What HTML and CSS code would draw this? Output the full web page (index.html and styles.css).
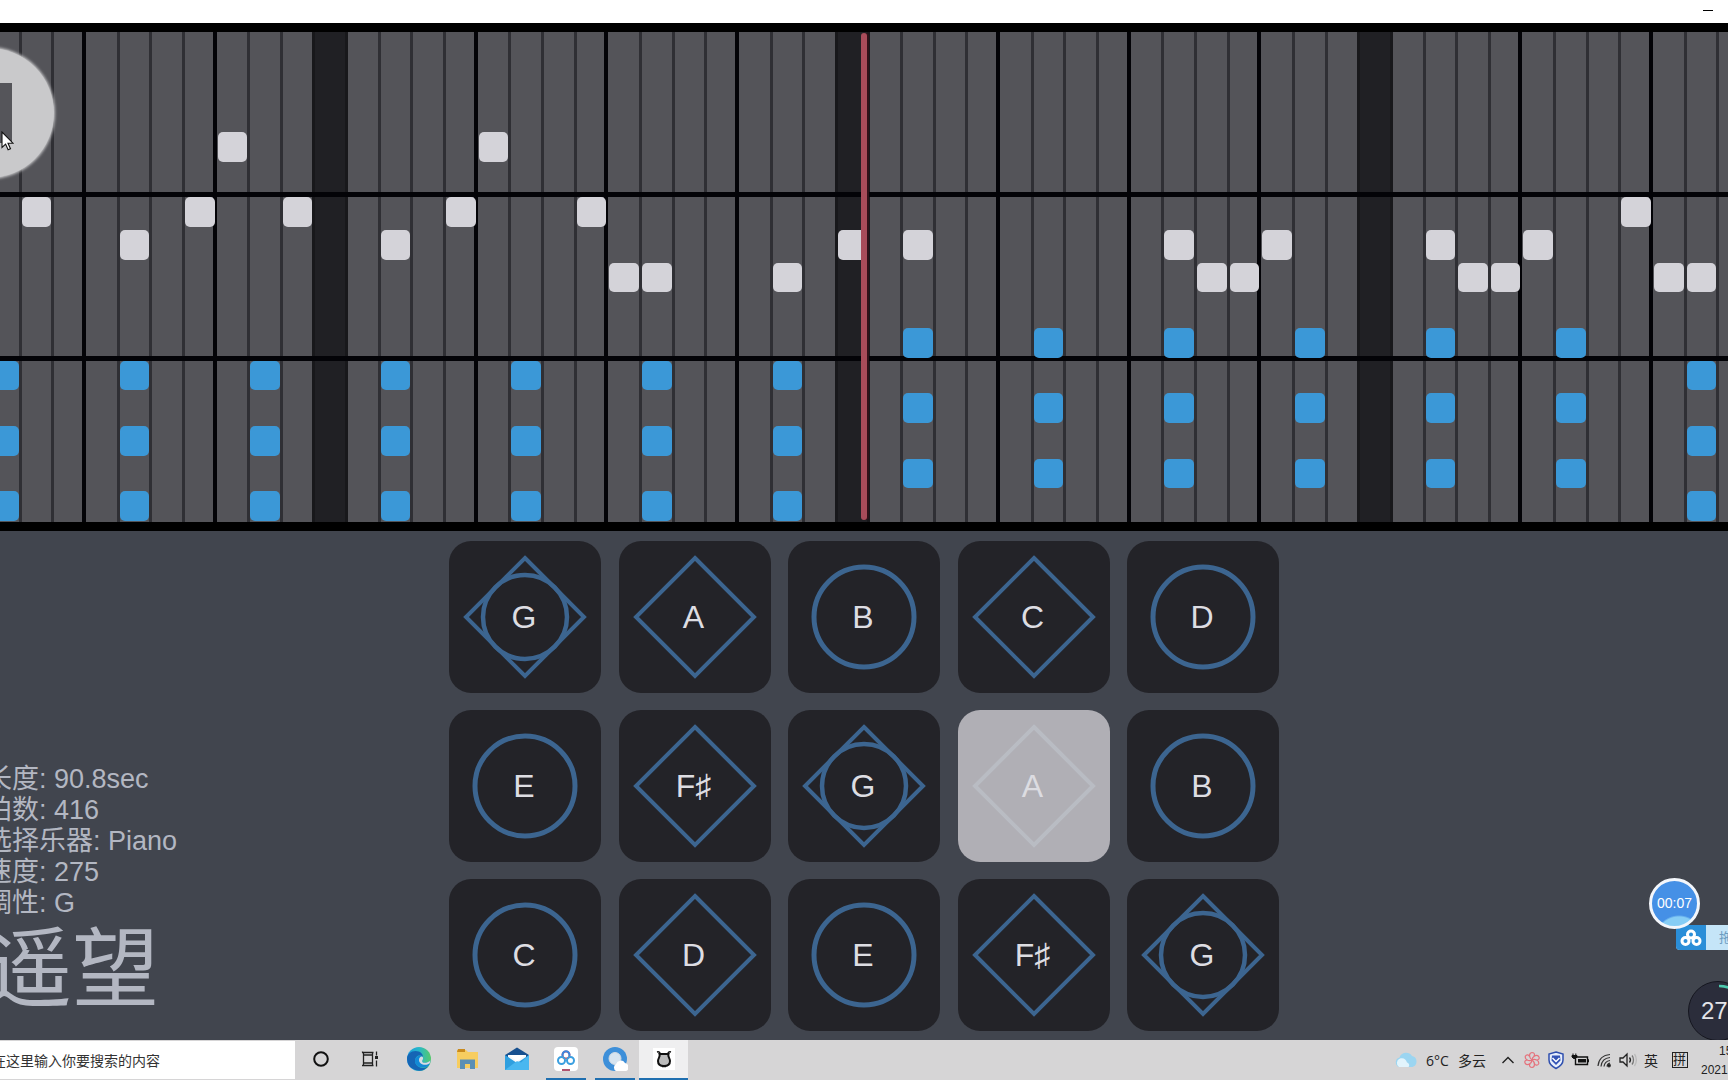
FILE: index.html
```html
<!DOCTYPE html>
<html lang="zh-CN">
<head>
<meta charset="utf-8">
<title>遥望</title>
<link rel="stylesheet" href="styles.css">
</head>
<body>
<header class="titlebar">
  <button class="minimize" type="button" aria-label="最小化"></button>
</header>

<section class="board" aria-label="乐谱">
  <div class="roll" id="roll"></div>
  <div class="playhead"></div>
  <button class="stop" type="button" aria-label="停止"><span class="stop-mark"></span></button>
  <svg class="cursor" width="13" height="20" viewBox="0 0 13 20"><path d="M1 1v15.500l3.600-3.400 2.500 5.600 2.400-1-2.500-5.500H12z" fill="#fff" stroke="#111" stroke-width="1.100"/></svg>
</section>

<main class="stage">
  <section class="info">
    <ul class="facts">
      <li>长度: 90.8sec</li>
      <li>拍数: 416</li>
      <li>选择乐器: Piano</li>
      <li>速度: 275</li>
      <li>调性: G</li>
    </ul>
    <h1 class="song">遥望</h1>
  </section>
  <section class="keys" id="keys" aria-label="琴键"></section>

  <div class="timer">00:07</div>
  <div class="drop">
    <span class="drop-icon"><svg width="22" height="18" viewBox="0 0 22 18" fill="none" stroke="#fff" stroke-width="3"><circle cx="11" cy="5.500" r="3.500"/><circle cx="5.500" cy="12" r="3.500"/><circle cx="16.500" cy="12" r="3.500"/></svg></span>
    <span class="drop-text">拖</span>
  </div>
  <div class="gauge"><svg class="gauge-arc" width="60" height="60" viewBox="0 0 60 60" fill="none"><path d="M30 4a26 26 0 0 1 18 7" stroke="#4cc9ad" stroke-width="2.500"/></svg>27</div>
</main>

<footer class="taskbar">
  <label class="search"><input class="search-box" type="text" placeholder="在这里输入你要搜索的内容" aria-label="搜索"></label>
  <nav class="apps">
    <button class="app" type="button" aria-label="Cortana"><svg width="24" height="24" viewBox="0 0 24 24"><circle cx="12" cy="12" r="6.800" fill="none" stroke="#111" stroke-width="2"/></svg></button>
    <button class="app" type="button" aria-label="任务视图"><svg width="24" height="24" viewBox="0 0 24 24" fill="none" stroke="#222" stroke-width="1.300"><path d="M5.500 8h9v8h-9zM4.500 5.500v-1M4 5.500h11.500M4 18.500h11.500M5.500 5v14M14.500 5v14M18.500 4.500v4M18.500 13.500v6"/><path d="M17 9h3v3h-3z" fill="#222" stroke="none"/></svg></button>
    <button class="app" type="button" aria-label="Edge"><svg width="26" height="26" viewBox="0 0 26 26"><defs><linearGradient id="eg" x1="0" x2="1"><stop offset="0" stop-color="#1b9be0"/><stop offset=".5" stop-color="#27b8c8"/><stop offset="1" stop-color="#56c96a"/></linearGradient></defs><circle cx="13" cy="13" r="12" fill="url(#eg)"/><path d="M1 13c0-5 4-8 8.500-8 5 0 7.500 3 7.500 6-3-3-8-1-8 4 0 4 4 7 8 7 2 0 4-.8 5.500-2A12 12 0 0 1 1 13z" fill="#1565b5"/><path d="M9 15c0-4 4-6.500 8-4 1 2-.8 2.800-.8 4.200 0 2 5 2.300 8.300-.7-.2 2-1 4-2.200 5.500-5 3-13.300 1-13.300-5z" fill="#1389d6"/><path d="M13 14c0-3 3-4.500 4-2.500.6 1.500-.8 2.300-.8 3.700 0 2.300 4.800 2.300 8.300-.7-.2 1.200-.6 2.200-1 3-4.500 3-10.500.5-10.500-3.500z" fill="#d7dce0"/></svg></button>
    <button class="app" type="button" aria-label="文件资源管理器"><svg width="26" height="26" viewBox="0 0 26 26"><path d="M2 4h9l2 2h10v16H2z" fill="#f7cd60"/><path d="M3 3h7v3H2z" fill="#c98a1d"/><path d="M5 23v-9.500h15V23h-5v-5h-5v5z" fill="#5a8fb5"/></svg></button>
    <button class="app" type="button" aria-label="邮件"><svg width="26" height="26" viewBox="0 0 26 26"><path d="M1 9l12-7.500L25 9v5H1z" fill="#17508f"/><path d="M4 9h18v8H4z" fill="#f4f7fa"/><path d="M1 9l12 8L25 9v15H1z" fill="#2f9fdf"/><path d="M1 24L13 15l4 1.500L25 9v15z" fill="#49b7f0"/><path d="M5 9h16l-8 6.500z" fill="#fff"/></svg></button>
    <button class="app running" type="button" aria-label="百度网盘"><svg width="26" height="26" viewBox="0 0 26 26" fill="none" stroke-width="2"><rect x="1" y="1" width="24" height="24" rx="4" fill="#fff"/><circle cx="13" cy="9" r="3.500" stroke="#e0566b"/><path d="M9.700 10a3.500 3.500 0 1 1 6.600 0" stroke="#3a86e0"/><circle cx="8.500" cy="14.500" r="3.500" stroke="#3a9fe0"/><circle cx="17.500" cy="14.500" r="3.500" stroke="#3a9fe0"/><path d="M9 24h8" stroke="#b0546f"/></svg></button>
    <button class="app running" type="button" aria-label="云浏览器"><svg width="26" height="26" viewBox="0 0 26 26"><circle cx="13" cy="13" r="12" fill="#3d8fd9"/><circle cx="13" cy="12.500" r="6" fill="#d6e4f0" stroke="#cfd9e2"/><path d="M14 25a4 4 0 0 1 0-7 5 5 0 0 1 9-1 4.200 4.200 0 0 1 1 8z" fill="#fff"/></svg></button>
    <button class="app active" type="button" aria-label="弹琴"><svg width="24" height="24" viewBox="0 0 24 24"><path d="M1 1h22v22H1z" fill="#fff"/><path d="M7.500 7c1 3-1.500 4-1.500 7 0 3.500 2.500 5 6 5s6-1.500 6-5c0-3-2.500-4-1.500-7z" fill="#bbb" stroke="#111" stroke-width="2"/><path d="M5 5c2-.5 3 0 3 2h8c0-2 1-2.500 3-2M10 19.500h4" fill="none" stroke="#111" stroke-width="1.600"/></svg></button>
  </nav>
  <div class="tray">
    <svg class="weather" width="24" height="18" viewBox="0 0 24 18"><path d="M5 16a5 5 0 0 1 .5-9.500A7 7 0 0 1 18 5c3 .5 4.500 2.500 4.500 5.500 0 3-2 5.500-5 5.500z" fill="#9bd5f1"/><path d="M5 16a4.800 4.800 0 0 1 1-8.500c4-1 6 1 7 4 2 .5 3 3 1.500 4.500z" fill="#e2f4fc"/></svg>
    <span class="temp">6°C</span>
    <span class="sky">多云</span>
    <svg class="tray-icon" width="24" height="20" viewBox="0 0 24 20"><path d="M6.500 13L12 7.500l5.500 5.500" fill="none" stroke="#222" stroke-width="1.400"/></svg>
    <svg class="tray-icon" width="24" height="20" viewBox="0 0 24 20" fill="none" stroke="#e5727c" stroke-width="1.200"><path d="M12 10c-3-2-3.500-7 0-7.500 3 0 3 3 1.500 4M12 10c.2-3.500 4.500-6 6.700-3.500 1.500 2.500-1 4-2.700 3.300M12 10c3-1.600 7.300.5 6.700 3.700-1.300 2.500-4 1.500-4.200-.4M12 10c3 2 3.500 7 0 7.500-3 0-3-3-1.500-4M12 10c-.2 3.500-4.500 6-6.700 3.500C3.800 11 6.300 9.500 8 10.200M12 10c-3 1.600-7.300-.5-6.700-3.700C6.600 3.800 9.300 4.800 9.500 6.700"/></svg>
    <svg class="tray-icon" width="24" height="20" viewBox="0 0 24 20"><path d="M12 2l7 2v6c0 4-3 6.500-7 8.500-4-2-7-4.500-7-8.500V4z" fill="#e8effc" stroke="#2f4fae" stroke-width="1.500"/><path d="M8 5.500h8l.5 5-4.500 4.500-4.500-4.500z" fill="#3353b5"/><path d="M8.500 8l3.500 3.500L15.500 8" fill="none" stroke="#fff" stroke-width="1.500"/></svg>
    <svg class="tray-icon" width="24" height="20" viewBox="0 0 24 20"><path d="M7.500 7h12v7.500h-12z" fill="none" stroke="#111" stroke-width="1.400"/><path d="M10 9h8v3.500h-8zM19.500 9.300h1.500v3h-1.500z" fill="#111"/><path d="M5 3.500v2.500M7.800 3.500v2.500M4 5.500h5v1.500L7.500 8.500h-2L4 7z" fill="#111" stroke="#111"/></svg>
    <svg class="tray-icon" width="24" height="20" viewBox="0 0 24 20" fill="none" stroke="#333" stroke-width="1.200"><path d="M6 16C6.500 9.500 11 5 18 4.500M9 16.500c.5-5 4-8.500 9-9M12 16.500c.5-3.500 2.500-5.500 6-6M15 16.500c.3-2 1-3 3-3.500"/><circle cx="17" cy="15.500" r="1.300" fill="#111"/></svg>
    <svg class="tray-icon" width="24" height="20" viewBox="0 0 24 20" fill="none" stroke="#222" stroke-width="1.300"><path d="M4 8h3l4-4v12l-4-4H4zM13.500 7.500c1.200 1.500 1.200 3.500 0 5"/><path d="M16 5.500c2 2.500 2 6.500 0 9" stroke="#777"/><path d="M18.500 4c2.500 3.500 2.500 8.500 0 12" stroke="#bbb"/></svg>
    <span class="ime">英</span>
    <span class="ime-mode">拼</span>
    <div class="clock"><span class="clock-time">15</span><span>2021</span></div>
  </div>
</footer>
<script src="app.js"></script>
</body>
</html>
```
FILE: app.js
```js
// Piano roll: 54 sixteenth columns by 15 pitch rows
const COLUMNS = 54;
const roll = document.getElementById('roll');
const measures = [10, 26, 42];

for (let c = 0; c < COLUMNS; c++) {
  const col = document.createElement('div');
  col.className = 'col';
  if (measures.includes(c)) col.classList.add('measure');
  else if (measures.includes(c - 1)) col.classList.add('after-measure');
  else if (c % 4 === 3) col.classList.add('beat');
  col.style.gridColumn = c + 1;
  roll.append(col);
}

for (const row of [6, 11]) {
  const line = document.createElement('div');
  line.className = 'octave';
  line.style.gridRow = row;
  roll.append(line);
}

const melody = [
  [1, 5], [4, 6], [6, 5], [7, 3], [9, 5], [12, 6], [14, 5], [15, 3], [18, 5],
  [19, 7], [20, 7], [24, 7], [26, 6], [28, 6], [36, 6], [37, 7], [38, 7],
  [39, 6], [44, 6], [45, 7], [46, 7], [47, 6], [50, 5], [51, 7], [52, 7]
];
const chords = [];
for (let c = 0; c < COLUMNS; c += 4) {
  const top = c >= 28 && c <= 48 ? 9 : 10;
  chords.push([c, top], [c, top + 2], [c, top + 4]);
}

function addNotes(notes, kind) {
  for (const [c, r] of notes) {
    const note = document.createElement('div');
    note.className = 'note ' + kind;
    note.style.gridColumn = c + 1;
    note.style.gridRow = r + 1;
    roll.append(note);
  }
}
addNotes(melody, 'melody');
addNotes(chords, 'chord');

// Key pads: d = diamond, c = circle, b = both
const pads = [
  ['G', 'b'], ['A', 'd'], ['B', 'c'], ['C', 'd'], ['D', 'c'],
  ['E', 'c'], ['F♯', 'd'], ['G', 'b'], ['A', 'd'], ['B', 'c'],
  ['C', 'c'], ['D', 'd'], ['E', 'c'], ['F♯', 'd'], ['G', 'b']
];
const diamond = '<path d="M76 17L135 76 76 135 17 76z" stroke-width="4"/>';
const shapes = {
  d: diamond,
  c: '<circle cx="76" cy="76" r="50" stroke-width="5"/>',
  b: diamond + '<circle cx="76" cy="76" r="42" stroke-width="4.500"/>'
};
const keys = document.getElementById('keys');
pads.forEach(([name, shape], i) => {
  const key = document.createElement('button');
  key.type = 'button';
  key.className = i === 8 ? 'key pressed' : 'key';
  key.innerHTML = `<svg class="key-shape" viewBox="0 0 152 152">${shapes[shape]}</svg><span class="key-name">${name}</span>`;
  keys.append(key);
});
```
FILE: styles.css
```css
* {
  box-sizing: border-box;
}

body {
  margin: 0;
  min-height: 100vh;
  display: flex;
  flex-direction: column;
  overflow: hidden;
  background: #41454e;
  color: #222;
  font-family: "Liberation Sans", "Noto Sans CJK SC", sans-serif;
}

button {
  padding: 0;
  border: 0;
  background: none;
  font: inherit;
  color: inherit;
}

svg {
  display: block;
}

.titlebar {
  display: flex;
  justify-content: flex-end;
  height: 23px;
  padding-right: 4px;
  background: #fff;
}

.minimize {
  display: grid;
  place-items: center;
  width: 32px;
  height: 20px;
}

.minimize::before {
  content: "";
  width: 10px;
  height: 1px;
  background: #000;
}

.board {
  position: relative;
  overflow: hidden;
  padding: 9px 0;
  background: #000;
}

.roll {
  display: grid;
  grid-template-columns: repeat(54, minmax(0, 1fr));
  grid-template-rows: repeat(15, minmax(0, 1fr));
  height: 490px;
  margin: 0 -22px 0 -13px;
}

.col {
  grid-row: 1 / -1;
  margin-left: -1px;
  border-left: 3px solid #2f2f34;
  background: #545459;
}

.beat {
  margin-left: -3px;
  border-left: 4px solid #030307;
}

.measure,
.after-measure {
  border-left-color: #18181b;
}

.measure {
  background: #202024;
}

.octave {
  grid-column: 1 / -1;
  height: 5px;
  margin-top: -3px;
  background: #030307;
}

.note {
  margin: 2px 1px 1px 2px;
  border-radius: 5px;
}

.melody {
  background: #d4d3d9;
}

.chord {
  background: #3b98d7;
}

.playhead {
  position: absolute;
  top: 10px;
  bottom: 11px;
  left: calc(50% - 3px);
  width: 6px;
  border-radius: 3px;
  background: #a84c5a;
  box-shadow: 2px 0 #301119;
}

.stop {
  position: absolute;
  top: 25px;
  left: -76px;
  width: 130px;
  height: 130px;
  display: grid;
  place-items: center;
  border-radius: 50%;
  background: #c9c9cb;
  box-shadow: 0 0 3px 1px #c9c9cb;
}

.stop-mark {
  width: 46px;
  height: 60px;
  background: #55555a;
}

.cursor {
  position: absolute;
  top: 108px;
  left: 1px;
}

.stage {
  position: relative;
  flex: 1;
  display: grid;
  grid-template-columns: minmax(0, 1fr) 830px minmax(0, 1fr);
  padding: 10px 0 9px;
}

.info {
  align-self: end;
  margin-left: -15px;
  padding-bottom: 10px;
  color: #b3b7c2;
  white-space: nowrap;
}

.facts {
  margin: 0;
  padding: 0;
  list-style: none;
  font-size: 27px;
  line-height: 31px;
}

.song {
  margin: 0;
  font-size: 87px;
  font-weight: 400;
  line-height: 102px;
}

.keys {
  display: grid;
  grid-template-columns: repeat(5, 152px);
  grid-auto-rows: 152px;
  justify-content: space-between;
  row-gap: 17px;
}

.key {
  display: grid;
  place-items: center;
  border-radius: 22px;
  background: #232328;
  color: #dddde2;
  font-size: 32px;
}

.key-shape {
  grid-area: 1 / 1;
  width: 152px;
  height: 152px;
  fill: none;
  stroke: #3c6590;
}

.key-name {
  grid-area: 1 / 1;
  padding-right: 2px;
}

.pressed {
  background: #b0afb5;
  color: #dcdce1;
}

.pressed .key-shape {
  stroke: #b9bcc3;
}

.timer {
  position: absolute;
  top: 347px;
  right: 28px;
  width: 51px;
  height: 51px;
  border: 3px solid #f3f6fb;
  border-radius: 50%;
  background: radial-gradient(circle at 60% 130%, #86cdf5 35%, #4590e6 38%);
  color: #fff;
  font-size: 14px;
  line-height: 45px;
  text-align: center;
  z-index: 1;
}

.drop {
  position: absolute;
  top: 394px;
  right: 0;
  display: flex;
  width: 52px;
  height: 25px;
  overflow: hidden;
  border-radius: 4px 0 0 4px;
  background: #c5e5f8;
  color: #6c9cc0;
  font-size: 13px;
  line-height: 25px;
}

.drop-icon {
  flex: none;
  display: grid;
  place-items: center;
  width: 30px;
  margin-right: 13px;
  background: #2a8ed8;
}

.gauge {
  position: absolute;
  top: 450px;
  right: -20px;
  width: 60px;
  height: 60px;
  padding-left: 12px;
  border: 1px solid #15161f;
  border-radius: 50%;
  background: #2b2d3b;
  color: #e4e5ea;
  font-size: 24px;
  line-height: 58px;
}

.gauge-arc {
  position: absolute;
  inset: 0;
}

.taskbar {
  position: relative;
  display: flex;
  height: 40px;
  background: #d6d5d6;
  font-size: 14px;
}

.search {
  display: flex;
  width: 295px;
  padding: 1px 0;
}

.search-box {
  flex: 1;
  margin-left: -40px;
  padding: 2px 0 0 32px;
  border: 0;
  background: #fff;
  font: inherit;
}

.search-box::placeholder {
  color: #333;
  opacity: 1;
}

.apps {
  display: flex;
  margin-left: 1px;
}

.app {
  display: grid;
  place-items: center;
  width: 49px;
  border-bottom: 2px solid transparent;
}

.running {
  background: linear-gradient(#1f6fb0, #1f6fb0) bottom / 40px 2px no-repeat border-box;
}

.active {
  border-bottom-color: #1f6fb0;
  background: #efeff0;
}

.tray {
  display: flex;
  align-items: center;
  margin-left: auto;
  color: #222;
}

.weather {
  margin-right: 8px;
}

.temp {
  width: 32px;
  font-family: "Open Sans", sans-serif;
}

.sky {
  margin-right: 10px;
}

.ime {
  margin: 0 14px 0 4px;
}

.ime-mode {
  width: 16px;
  border: 1px solid #222;
  font-size: 13px;
  line-height: 14px;
}

.clock {
  display: flex;
  flex-direction: column;
  width: 27px;
  margin-left: 13px;
  padding-top: 2px;
  overflow: hidden;
  font-size: 12px;
  line-height: 19px;
}

.clock-time {
  margin-left: 18px;
}
```
